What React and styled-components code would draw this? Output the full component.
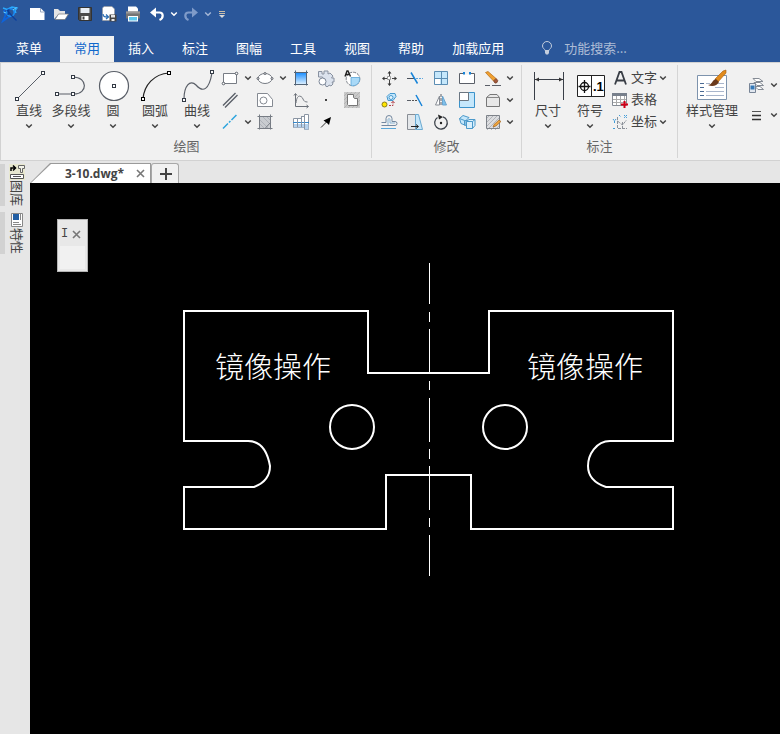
import React from "react";
import styled, { createGlobalStyle, css } from "styled-components";

const GlobalStyle = createGlobalStyle`
  *, *::before, *::after { box-sizing: border-box; }
  body {
    margin: 0;
    font-family: "Noto Sans CJK SC", sans-serif;
    font-size: 13px;
    color: #444;
    overflow: hidden;
  }
  button, input { font: inherit; color: inherit; }
`;

const Window = styled.div`
  display: flex;
  flex-direction: column;
  height: 100vh;
  background: #e6e6e6;
`;

const Header = styled.header`
  background: #2b579a;
  color: #fff;
`;

const PlainButton = styled.button`
  display: flex;
  align-items: center;
  justify-content: center;
  padding: 0;
  border: 0;
  background: transparent;
  cursor: default;
`;

const Svg = styled.svg`
  display: block;
  flex: none;
  overflow: visible;
`;

/* ---------- quick access bar ---------- */

const QuickBar = styled.div`
  display: flex;
  align-items: center;
  height: 28px;
`;

const LogoButton = styled(PlainButton)`
  width: 20px;
  height: 28px;
  margin-right: 5px;
`;

const QuickButton = styled(PlainButton)`
  width: ${(p) => (p.$narrow ? "18px" : "24px")};
  height: 28px;
`;

const QuickArrow = styled(PlainButton)`
  width: 10px;
  height: 28px;
`;

/* ---------- menu tabs ---------- */

const MenuBar = styled.nav`
  display: flex;
  align-items: flex-end;
  height: 34px;
  padding-left: 2px;
`;

const MenuTab = styled(PlainButton)`
  height: 26px;
  padding: 0 14px 4px;
  white-space: nowrap;
  ${(p) =>
    p.$active &&
    css`
      background: #f1f1f1;
      color: #1068cc;
    `}
  ${(p) => p.$first && css`margin-right: 4px;`}
`;

const SearchBox = styled.label`
  display: flex;
  align-items: center;
  gap: 8px;
  flex: 1;
  min-width: 0;
  height: 26px;
  padding: 0 0 4px 20px;
`;

const SearchInput = styled.input`
  flex: 1;
  min-width: 0;
  height: 20px;
  padding: 0;
  border: 0;
  outline: 0;
  background: transparent;
  &::placeholder { color: #adbcd6; opacity: 1; }
`;

/* ---------- ribbon ---------- */

const Ribbon = styled.section`
  display: flex;
  height: 99px;
  padding: 0;
  border: 1px solid #d2d2d2;
  border-right: 0;
  background: #f1f1f1;
  overflow: hidden;
`;

const Group = styled.div`
  display: flex;
  flex-direction: column;
  flex: none;
  margin: 2px 0;
  padding: ${(p) => p.$pad || "0 5px"};
  border-right: ${(p) => (p.$last ? "0" : "1px solid #d5d5d5")};
`;

const GroupBody = styled.div`
  display: flex;
  height: 72px;
`;

const GroupLabel = styled.div`
  line-height: 18px;
  text-align: center;
  color: #666;
`;

const BigButton = styled(PlainButton)`
  flex-direction: column;
  justify-content: flex-start;
  width: ${(p) => (p.$wide ? "60px" : "42px")};
  padding-top: 5px;
  white-space: nowrap;
`;

const BigLabel = styled.span`
  line-height: 16px;
  padding-bottom: 5px;
`;

const ToolGrid = styled.div`
  display: grid;
  grid-template-columns: ${(p) => p.$columns};
  grid-auto-rows: 22px;
  margin-top: 2px;
`;

const SmallButton = styled(PlainButton)`
  width: 100%;
  height: 22px;
  gap: 2px;
  grid-column: ${(p) => p.$col || "auto"};
  white-space: nowrap;
`;

const TextTool = styled(SmallButton)`
  justify-content: flex-start;
  line-height: 18px;
`;

const TextToolLabel = styled.span`
  padding-bottom: 2px;
`;

const StyleGrid = styled.div`
  display: grid;
  grid-template-columns: 26px 10px;
  grid-auto-rows: 30px;
  padding: 9px 0 0 1px;
`;

/* ---------- workspace ---------- */

const Workspace = styled.div`
  display: flex;
  flex: 1;
  min-height: 0;
`;

const SideBar = styled.aside`
  display: flex;
  flex-direction: column;
  gap: 6px;
  width: 30px;
  padding-top: 3px;
`;

const SideTab = styled(PlainButton)`
  flex-direction: column;
  justify-content: flex-start;
  align-items: center;
  width: 28px;
  height: 42px;
  padding-left: 1px;
  border-left: 5px solid #d2d2d2;
`;

const SideLabel = styled.span`
  writing-mode: vertical-rl;
  text-orientation: sideways;
  font-size: 13px;
  line-height: 16px;
`;

const Main = styled.main`
  display: flex;
  flex-direction: column;
  flex: 1;
  min-width: 0;
`;

const DocTabs = styled.div`
  display: flex;
  align-items: flex-end;
  height: 22px;
`;

const slant = "polygon(0 100%, 20px 0, 100% 0, 100% 100%)";

const DocTab = styled.div`
  position: relative;
  display: flex;
  align-items: center;
  gap: 12px;
  height: 20px;
  padding: 0 6px 0 35px;
  isolation: isolate;
  background: #9a9a9a;
  clip-path: ${slant};
  font-family: "Open Sans", "Noto Sans", sans-serif;
  font-size: 12px;
  font-weight: 700;
  &::before {
    content: "";
    position: absolute;
    z-index: -1;
    inset: 1px 1px 0 1px;
    background: #fff;
    clip-path: ${slant};
  }
`;

const NewTab = styled(PlainButton)`
  width: 28px;
  height: 20px;
  padding-left: 2px;
  border: 1px solid #a8a8a8;
  border-bottom: 0;
  border-radius: 3px 3px 0 0;
  background: #f1f1f1;
`;

const Canvas = styled.div`
  position: relative;
  flex: 1;
  min-height: 0;
  background: #000;
`;

const Drawing = styled.svg`
  display: block;
  width: 100%;
  height: 100%;
`;

const FloatPanel = styled.div`
  position: absolute;
  left: 27px;
  top: 36px;
  display: flex;
  flex-direction: column;
  width: 31px;
  height: 53px;
  padding: 2px;
  border: 1px solid #b4b4b4;
  background: #e8e8e8;
`;

const FloatHeader = styled.div`
  display: flex;
  align-items: center;
  gap: 4px;
  height: 24px;
  padding-left: 1px;
`;

const FloatTitle = styled.span`
  font-family: "Liberation Mono", monospace;
  font-size: 12px;
  line-height: 16px;
`;

const FloatBody = styled.div`
  flex: 1;
  background: #f1f1f1;
`;

/* ---------- icons ---------- */

function Icon({ size = 18, children }) {
  return (
    <Svg width={size} height={size} viewBox={`0 0 ${size} ${size}`} fill="none" stroke="#5a5f68" aria-hidden="true">
      {children}
    </Svg>
  );
}

function Chevron({ color = "#444" }) {
  return (
    <Svg width="8" height="6" viewBox="0 0 8 6" fill="none" stroke={color} strokeWidth="1.5" aria-hidden="true">
      <path d="M1.2 1.5 4 4.2 6.8 1.5" />
    </Svg>
  );
}

function Cross() {
  return (
    <Svg width="9" height="9" viewBox="0 0 9 9" stroke="#777" strokeWidth="1.6" aria-hidden="true">
      <path d="M1 1l7 7M8 1 1 8" />
    </Svg>
  );
}

const Node = ({ x, y, color = "#333a45" }) => (
  <rect x={x - 1.5} y={y - 1.5} width="3" height="3" fill="#fff" stroke={color} />
);

const quickIcons = {
  logo: (
    <Icon>
      <path d="M2 3 6 4.500 11 2 16 3 14 5.500 15 8" stroke="#2aa9ff" strokeWidth="1.400" />
      <path d="M3 5 4.500 10 2 16 7 12.500 10 11" stroke="#0d63dd" strokeWidth="1.800" />
      <circle cx="9.500" cy="7.500" r="3.800" stroke="#1b8ef5" strokeWidth="1.600" />
      <path d="M6 5 11 11 15.500 15.500M8 4 7 10" stroke="#0a3f9c" strokeWidth="1.300" />
      <path d="M2.500 7 5 8M12 5 15.500 2.500" stroke="#69d4ff" />
    </Icon>
  ),
  fresh: (
    <Icon>
      <path d="M2 3h10.500l4 4V15H2z" fill="#fff" stroke="none" />
      <path d="M12.500 3v4h4" stroke="#9aa8c0" />
    </Icon>
  ),
  open: (
    <Icon>
      <path d="M2 14V4h4l2 2h5v3H7z" fill="#e4e4e4" stroke="none" />
      <path d="M3 14.500 6.500 9H16.500l-3.500 5.500z" fill="#fff" stroke="#777" strokeWidth=".7" />
    </Icon>
  ),
  save: (
    <Icon>
      <path d="M2.500 2.500h13v13h-12l-1-1z" fill="#4b4b4b" stroke="#333" />
      <path d="M4.500 3h9v5h-9z" fill="#e9eef5" stroke="none" />
      <path d="M5.500 11h7v4h-7z" fill="#fff" stroke="none" />
      <path d="M6.500 11.500h2v3h-2z" fill="#444" stroke="none" />
    </Icon>
  ),
  exportDwg: (
    <Icon>
      <path d="M4 1.500h8l2.500 2.500V15.500H2.500V3z" fill="#fff" stroke="#999" strokeWidth=".6" />
      <path d="M3 9c0 3 2 3 5 3M6 9.500 8.500 12 6 14" stroke="#2d6fb4" strokeWidth="1.300" />
      <path d="M9.500 9.500h7v7h-7z" fill="#444" stroke="none" />
      <path d="M11 10h4v2.500h-4zM11.500 14h3v2h-3z" fill="#e6e6e6" stroke="none" />
    </Icon>
  ),
  print: (
    <Icon>
      <path d="M4 1.500h8l2 2V7H4z" fill="#fff" stroke="none" />
      <path d="M2 6.500h14v7H2z" fill="#757575" stroke="none" />
      <path d="M2 6.500h14v2H2z" fill="#9a9a9a" stroke="none" />
      <path d="M4 11h10v5.500H4z" fill="#fff" stroke="none" />
      <path d="M5 12h8v3.500H5z" fill="#5cc9ef" stroke="none" />
    </Icon>
  ),
  undo: (
    <Icon>
      <path d="M8 2.500 2 7.500 8 12.500" fill="#fff" stroke="none" />
      <path d="M7 7.500h4.500c4 0 4.500 5.500 0 7.500" stroke="#fff" strokeWidth="2.200" />
    </Icon>
  ),
  redo: (
    <Icon>
      <path d="M10 2.500 16 7.500 10 12.500" fill="#7f9bc9" stroke="none" />
      <path d="M11 7.500H6.500c-4 0-4.500 5.500 0 7.500" stroke="#7f9bc9" strokeWidth="2.200" />
    </Icon>
  ),
};

const bigIcons = {
  line: (
    <Icon size={32}>
      <path d="M4 29 30 3" />
      <Node x={4} y={29} /><Node x={30} y={3} />
    </Icon>
  ),
  polyline: (
    <Icon size={32}>
      <path d="M2 24H19C33 24 33 7 18 7" strokeWidth="1.200" />
      <Node x={2} y={24} /><Node x={18} y={24} /><Node x={18} y={7} />
    </Icon>
  ),
  circle: (
    <Icon size={32}>
      <circle cx="17" cy="16" r="14.500" fill="#fff" strokeWidth="1.200" />
      <Node x={17} y={16} />
    </Icon>
  ),
  arc: (
    <Icon size={32}>
      <path d="M4 29C5 15 15 4 30 3" stroke="#222" strokeWidth="1.200" />
      <Node x={4} y={29} color="#000" /><Node x={30} y={3} color="#000" />
    </Icon>
  ),
  spline: (
    <Icon size={32}>
      <path d="M3 29C3 16 9 9 15 15c7 8 13 5 16-12" strokeWidth="1.200" />
      <Node x={3} y={30} /><Node x={31} y={2} />
    </Icon>
  ),
  dimension: (
    <Icon size={32}>
      <path d="M2.500 2v28M31.500 2v28M3 9.500h28" stroke="#3a3f48" />
      <path d="M3 9.500 7 7.500v4zM31 9.500 27 7.500v4z" fill="#333" stroke="none" />
    </Icon>
  ),
  symbol: (
    <Icon size={32}>
      <path d="M3.500 5.500h27v21h-27zM17.500 5.500v21" fill="#fff" stroke="#222" />
      <circle cx="10.500" cy="16.500" r="4" stroke="#111" strokeWidth="1.300" />
      <path d="M4.500 16.500h12M10.500 10v13" stroke="#111" strokeWidth="1.300" />
      <text x="19" y="21" fill="#000" stroke="none" fontFamily="Liberation Sans, sans-serif" fontSize="13" fontWeight="700">.1</text>
    </Icon>
  ),
  styles: (
    <Icon size={32}>
      <path d="M1.500 5.500h29v24h-29z" fill="#fff" stroke="#7d93ad" />
      <path d="M4 13.500h4M4 17.500h4M4 21.500h4M4 25.500h4" stroke="#4a6a93" />
      <path d="M10 13.500h4M19 17.500h9M10 21.500h18M10 25.500h18M22 13.500h6" stroke="#a9b6cc" />
      <path d="M19 9 27 1l3-1v3l-8 9z" fill="#e08a1c" stroke="#a85c0c" strokeWidth=".6" />
      <path d="M12 15c4 0 4-5 8-6l3 3c-2 4-7 5-11 3z" fill="#6b3a1d" stroke="none" />
    </Icon>
  ),
};

const HatchLines = () => (
  <path d="M2 6 6 2M2 10l8-8M2 14 14 2M3 17 16 4M7 17l9-9M11 17l5-5" stroke="#a6a9ad" strokeWidth=".8" />
);

const small = {
  rect: (
    <Icon>
      <path d="M2.500 4.500h13v10h-13z" fill="#fff" stroke="#777c84" />
      <circle cx="15.500" cy="4.500" r="1.300" fill="#fff" /><circle cx="2.500" cy="14.500" r="1.300" fill="#fff" />
    </Icon>
  ),
  ellipse: (
    <Icon>
      <ellipse cx="9" cy="9.500" rx="7" ry="5" fill="#fff" stroke="#777c84" />
      <circle cx="9" cy="4.500" r="1" fill="#fff" /><circle cx="2" cy="9.500" r="1" fill="#fff" /><circle cx="16" cy="9.500" r="1" fill="#fff" />
    </Icon>
  ),
  gradient: (
    <Icon>
      <defs>
        <linearGradient id="blueFill" x1="0" y1="0" x2="0" y2="1">
          <stop offset="0" stopColor="#178cff" /><stop offset="1" stopColor="#e2f3ff" />
        </linearGradient>
      </defs>
      <path d="M3.500 3.500h11v12h-11z" fill="url(#blueFill)" stroke="none" />
      <path d="M3.500 1.500v15M14.500 1.500v15M2 3.500h14M2 15.500h14" stroke="#536477" />
    </Icon>
  ),
  gear: (
    <Icon>
      <path d="M1.500 2.500H5V5h2V2h4v3l2-1 3 3-1.500 2H17v4h-2l1 2-2 2-2-1-1 1.500H9L5.500 8h-4z" fill="#dbe2ed" stroke="#8891a0" />
      <circle cx="5.500" cy="12.500" r="3.500" fill="#fff" stroke="#7c8798" />
    </Icon>
  ),
  textArc: (
    <Icon>
      <circle cx="10" cy="10" r="6.800" fill="#fff" stroke="#777c84" strokeDasharray="3 1" />
      <path d="M8 8.500h8.500a6.800 6.800 0 0 1-8.500 8z" fill="#a9d9f7" stroke="#5aa6d8" strokeWidth=".8" />
      <path d="M2 7.500 4 2h1L7.500 7.500M3 5.500h3.500" stroke="#222" strokeWidth="1.400" />
    </Icon>
  ),
  parallel: (
    <Icon><path d="M2 14.500 14.500 2M4 16.500 16.500 4" strokeWidth="1.400" /></Icon>
  ),
  hole: (
    <Icon>
      <path d="M1.500 2.500h10l5 6v7h-15z" fill="#fff" stroke="#858a92" /><circle cx="7.500" cy="9.500" r="3.500" stroke="#858a92" />
    </Icon>
  ),
  graph: (
    <Icon>
      <path d="M3.500 3v12.500H16M2 4.500 3.500 2.500 5 4.500M14.500 14l2 1.500-2 1.500" stroke="#6b7078" />
      <path d="M4 12C5 2 10 5 11 8c.7 2 2 3 4.500 3" stroke="#777c84" />
    </Icon>
  ),
  point: (
    <Icon><path d="M8 8h2v2H8z" fill="#444" stroke="none" /></Icon>
  ),
  region: (
    <Icon>
      <path d="M1 1h16v16H1z" fill="#c9c9c9" stroke="none" />
      <path d="M1 5l4-4M1 9l8-8M1 13 13 1M1 17 17 1M5 17 17 5M9 17l8-8M13 17l4-4" stroke="#b0b0b0" strokeWidth=".8" />
      <path d="M4.500 3.500h6v3l1 1h3v7h-9l-1-1z" fill="#fff" stroke="#777" />
    </Icon>
  ),
  centerline: (
    <Icon><path d="M2 15.500 15.500 2" stroke="#2da5de" strokeWidth="1.500" strokeDasharray="7 1.500 2 1.500" /></Icon>
  ),
  hatch: (
    <Icon>
      <path d="M3 3h12v12H3z" fill="#c9ccd0" stroke="none" />
      <path d="M3 6l9 9M3 10l5 5M6 3l9 9M10 3l5 5" stroke="#a7abb2" strokeWidth=".8" />
      <path d="M3.500 1.500v15M14.500 1.500v15M1.500 3.500h15M1.500 15.500h15M9 15.500 15 9" stroke="#777c84" />
    </Icon>
  ),
  shaft: (
    <Icon>
      <path d="M1.500 5.500h8v-2h3v-2h4v15h-4v-2h-11z" fill="#fff" stroke="#8a95a3" />
      <path d="M2 11h14.500v5.500h-4v-2H2z" fill="#b5d2ee" stroke="none" />
      <path d="M1 9.500h16" stroke="#3388cc" /><path d="M5.500 5v9M9.500 3v11M12.500 3v13" stroke="#8a95a3" />
    </Icon>
  ),
  arrow: (
    <Icon><path d="M4 14.500 10 8.500" stroke="#333" /><path d="M14 4 12 12 10 10 6.500 7.500z" fill="#000" stroke="none" /></Icon>
  ),
  move: (
    <Icon>
      <path d="M9.500 4v3M9.500 11v4M4 9.500h3M12 9.500h3" stroke="#444" />
      <path d="M7.500 7.500h3v3h-3z" fill="#fff" stroke="#999" />
      <path d="M9.500 2l2 2.500h-4zM9.500 17l2-2.500h-4zM2 9.500l2.500-2v4zM17 9.500l-2.500-2v4z" fill="#333" stroke="none" />
    </Icon>
  ),
  trim: (
    <Icon>
      <path d="M1 9.500h8" stroke="#4a515c" /><path d="M10 9.500h7" stroke="#5da7df" strokeDasharray="2 1" /><path d="M5 3.500 11.500 14.500" stroke="#1683d8" strokeWidth="1.500" />
    </Icon>
  ),
  array: (
    <Icon>
      <path d="M2.500 2.500h13v13h-13z" fill="#c5e7fb" stroke="#5b8db3" /><path d="M3 10h5v5H3z" fill="#fff" stroke="none" /><path d="M9.500 2.500v13M2.500 9.500h13" stroke="#5b8db3" />
    </Icon>
  ),
  breakAt: (
    <Icon>
      <path d="M6 4.500H1.500v10h15v-10H12" fill="#fff" /><path d="M6 4.500h6" stroke="#f1f1f1" strokeWidth="2" /><path d="M5 3h2v2.500H5zM11 3h2v2.500h-2z" fill="#1683d8" stroke="none" />
    </Icon>
  ),
  erase: (
    <Icon>
      <path d="M1.500 3.500 4 2.500 12 9.500 9.500 12z" fill="#f0a030" stroke="#b56a13" strokeWidth=".7" />
      <path d="M9.500 12 12 9.500q3 2 1 4-2 2-3.500-1.500z" fill="#a55a3c" stroke="#734026" strokeWidth=".7" />
      <path d="M1 16.500h5M8 16.500h9" />
    </Icon>
  ),
  copy: (
    <Icon>
      <path d="M7 5.500 10 2.500h5l1 3-3 4H8z" fill="#c5e7fb" stroke="#4599cf" /><circle cx="11" cy="6.500" r="2" fill="#e6f5fd" stroke="#4599cf" />
      <circle cx="4.500" cy="13.500" r="2.500" fill="#ffe600" stroke="#8b7f1a" /><path d="M9 14.500h4v-4M11.500 12 13 10l1.500 2" stroke="#b2434d" strokeDasharray="2 1" />
    </Icon>
  ),
  extend: (
    <Icon>
      <path d="M1 9.500h4" /><path d="M6 9.500h6" stroke="#555" strokeDasharray="2 1" /><path d="M10 4 16 15" stroke="#1683d8" strokeWidth="1.500" />
    </Icon>
  ),
  mirror: (
    <Icon><path d="M7.500 5v9H3.500z" fill="#fff" stroke="#888d95" /><path d="M10.500 5v9H14.500z" fill="#7fc0ec" stroke="#6aa5cf" /><path d="M9 3v12" strokeDasharray="3 1" /></Icon>
  ),
  scale: (
    <Icon><path d="M1.500 1.500h15v15h-15z" fill="#c5e7fb" stroke="#3b92ca" /><path d="M1.500 1.500h9v8h-9z" fill="#fff" stroke="#6b7580" /></Icon>
  ),
  chamfer: (
    <Icon><path d="M2.500 6.500 6 3.500h7l2.500 3v9h-13z" fill="#e8e8e8" stroke="#777" /><path d="M2.500 6.500h13" stroke="#888" /></Icon>
  ),
  offset: (
    <Icon>
      <path d="M1.500 9.500H6v-4a3 3 0 0 1 6 0v3h3a2 2 0 0 1 0 4H1.500" stroke="#7388a0" />
      <path d="M1 15.500h15" stroke="#5aa6d8" /><path d="M8 12V7c0-2 2-2 2 0v3h5" stroke="#8ab5d5" />
    </Icon>
  ),
  stretch: (
    <Icon>
      <path d="M1.500 1.500h8v15h-8z" fill="#e4e7ea" stroke="#888d95" /><path d="M9.500 1.500h3l4 15h-7z" fill="#c5e7fb" stroke="#6ba9d0" /><path d="M5 13.500h7M10 11.500l2.500 2-2.500 2" stroke="#222" />
    </Icon>
  ),
  rotate: (
    <Icon>
      <path d="M5.500 4.500A6.300 6.300 0 1 0 11 3.800" stroke="#3d434b" strokeWidth="1.300" /><path d="M6 1.500 11 4 7 6.500z" fill="#222" stroke="none" /><circle cx="9" cy="10" r="1.200" fill="#222" stroke="none" />
    </Icon>
  ),
  explode: (
    <Icon>
      <path d="M1.500 5.500 5 2.500l6 2-3 3v5l-5 -2z" fill="#c5e7fb" stroke="#4b99ca" /><path d="M1.500 5.500l5 2v5M6.500 7.500h4" stroke="#4b99ca" />
      <path d="M8.500 8.500 11 6.500h6v6l-2.500 3h-6z" fill="#d9effc" stroke="#4b99ca" /><path d="M8.500 8.500h6v7M14.500 8.500l2.500-2" stroke="#4b99ca" />
    </Icon>
  ),
  hatchEdit: (
    <Icon>
      <path d="M2.500 2.500h13v13h-13z" fill="#dcdde0" stroke="none" /><HatchLines />
      <path d="M2.500 2.500h13v13h-13z" stroke="#7d8289" /><path d="M10 11.500 15 7l2 1.500-5 4.500-3 1z" fill="#eda23a" stroke="#985d18" strokeWidth=".6" />
    </Icon>
  ),
  letter: (
    <Icon>
      <path d="M4 15.500 8.500 3h2L15 15.500M5.500 11.500h8" stroke="#383d45" strokeWidth="1.800" />
    </Icon>
  ),
  table: (
    <Icon>
      <path d="M1.500 2.500h14v12h-14z" fill="#fff" stroke="#858b94" /><path d="M1 2h15v3H1z" fill="#777f8b" stroke="none" />
      <path d="M5.500 5v9M9.500 5v9M13.500 5v9M2 8.500h13M2 11.500h13" stroke="#aaa" /><path d="M10 13.500h7M13.500 10v7" stroke="#d00018" strokeWidth="2" />
    </Icon>
  ),
  coordinate: (
    <Icon>
      <path d="M6.500 4v11.500H16M6.500 8l5 4 4-5M11.500 9v7" stroke="#8b9199" strokeDasharray="3 1" />
      <path d="M2 6l1.500 2L5 6M3.500 8v3M8 2l2 2M13 2l3 3M16 2l-3 3M2 15.500h3" stroke="#409bd8" strokeDasharray="2 1" />
    </Icon>
  ),
  layers: (
    <Icon>
      <path d="M6 2.500h6l4 3H9zM7 6.500h6l3.500 3H10zM8 10.500h5l3.500 3H11z" fill="#fff" stroke="#858b94" />
      <path d="M2.500 7.500h6v9h-6z" fill="#e1e7ef" stroke="#778496" /><path d="M3.500 9.500h4v4h-4z" fill="#3479b8" stroke="none" />
    </Icon>
  ),
  lineWeight: (
    <Icon><path d="M5 5.500h9" stroke="#555" /><path d="M5 9.500h9M5 13.500h9" stroke="#333" strokeWidth="1.500" /></Icon>
  ),
};

const LibraryIcon = () => (
  <Icon size={16}>
    <path d="M0 0h16v16H0z" fill="#e8e8cf" stroke="none" />
    <path d="M2 7V4h4M4 1.500 6.500 4 4 6.500" stroke="#000" strokeWidth="1.500" />
    <path d="M9.500 1.500h6v3h-2v4h-2v-4h-2z" fill="#f4f4ea" stroke="#666" />
    <path d="M1.500 10.500h13v4h-13z" fill="#fff" stroke="#555" /><path d="M4 12.500h8" stroke="#555" />
  </Icon>
);

const PropertiesIcon = () => (
  <Icon size={16}>
    <path d="M2.500 1.500h11v13h-11z" fill="#fff" stroke="#888" /><path d="M4 2h6v6H4z" fill="#225fa4" stroke="none" />
    <path d="M11.500 2v6M4 10.500h6M4 12.500h8" stroke="#888" />
  </Icon>
);

/* ---------- data ---------- */

const menuTabs = ["菜单", "常用", "插入", "标注", "图幅", "工具", "视图", "帮助", "加载应用"];

const drawTools = [
  ["直线", "line"], ["多段线", "polyline"], ["圆", "circle"], ["圆弧", "arc"], ["曲线", "spline"],
];

const drawGrid = [
  ["矩形", "rect", 1], ["矩形选项", null, 2], ["椭圆", "ellipse", 3], ["椭圆选项", null, 4],
  ["渐变填充", "gradient", 5], ["齿轮", "gear", 6], ["弧形文字", "textArc", 7],
  ["平行线", "parallel", 1], ["孔", "hole", 3], ["公式曲线", "graph", 5], ["点", "point", 6], ["面域", "region", 7],
  ["中心线", "centerline", 1], ["中心线选项", null, 2], ["剖面线", "hatch", 3], ["轴", "shaft", 5], ["箭头", "arrow", 6],
];

const modifyGrid = [
  ["移动", "move", 1], ["裁剪", "trim", 2], ["阵列", "array", 3], ["打断", "breakAt", 4], ["删除", "erase", 5], ["删除选项", null, 6],
  ["复制", "copy", 1], ["延伸", "extend", 2], ["镜像", "mirror", 3], ["缩放", "scale", 4], ["倒角", "chamfer", 5], ["倒角选项", null, 6],
  ["等距", "offset", 1], ["拉伸", "stretch", 2], ["旋转", "rotate", 3], ["分解", "explode", 4], ["编辑剖面线", "hatchEdit", 5], ["编辑选项", null, 6],
];

const textTools = [["文字", "letter", true], ["表格", "table", false], ["坐标", "coordinate", true]];

function BigTool({ label, icon, wide }) {
  return (
    <BigButton type="button" $wide={wide}>
      {bigIcons[icon]}
      <BigLabel>{label}</BigLabel>
      <Chevron />
    </BigButton>
  );
}

function IconTools({ tools, columns }) {
  return (
    <ToolGrid $columns={columns}>
      {tools.map(([name, icon, col]) => (
        <SmallButton key={name} type="button" aria-label={name} $col={col}>
          {icon ? small[icon] : <Chevron />}
        </SmallButton>
      ))}
    </ToolGrid>
  );
}

export default function App() {
  return (
    <Window>
      <GlobalStyle />
      <Header>
        <QuickBar>
          <LogoButton type="button" aria-label="应用菜单">{quickIcons.logo}</LogoButton>
          <QuickButton type="button" aria-label="新建">{quickIcons.fresh}</QuickButton>
          <QuickButton type="button" aria-label="打开">{quickIcons.open}</QuickButton>
          <QuickButton type="button" aria-label="保存">{quickIcons.save}</QuickButton>
          <QuickButton type="button" aria-label="另存为">{quickIcons.exportDwg}</QuickButton>
          <QuickButton type="button" aria-label="打印">{quickIcons.print}</QuickButton>
          <QuickButton type="button" aria-label="撤销">{quickIcons.undo}</QuickButton>
          <QuickArrow type="button" aria-label="撤销列表"><Chevron color="#fff" /></QuickArrow>
          <QuickButton type="button" aria-label="恢复">{quickIcons.redo}</QuickButton>
          <QuickArrow type="button" aria-label="恢复列表"><Chevron color="#a5b7d6" /></QuickArrow>
          <QuickButton type="button" aria-label="自定义" $narrow>
            <Svg width="6" height="7" viewBox="0 0 6 7" aria-hidden="true">
              <path d="M0 .5h6M0 2.500h6" stroke="#c9bda9" /><path d="M0 4h6L3 7z" fill="#d8d8d8" />
            </Svg>
          </QuickButton>
        </QuickBar>
        <MenuBar>
          {menuTabs.map((tab, i) => (
            <MenuTab key={tab} type="button" $first={i === 0} $active={i === 1}>{tab}</MenuTab>
          ))}
          <SearchBox>
            <Svg width="18" height="16" viewBox="0 0 18 16" fill="none" stroke="#c4cede" aria-hidden="true">
              <path d="M7 11.500C7 10 4.500 9.500 4.500 7a4.500 4.500 0 0 1 9 0c0 2.500-2.500 3-2.500 4.500z" />
              <path d="M7 12h4v2L10 15.500H8L7 14z" fill="#c4cede" stroke="none" />
            </Svg>
            <SearchInput type="text" placeholder="功能搜索..." aria-label="功能搜索" />
          </SearchBox>
        </MenuBar>
      </Header>

      <Ribbon>
        <Group $pad="0 6px 0 7px">
          <GroupBody>
            {drawTools.map(([label, icon]) => <BigTool key={icon} label={label} icon={icon} />)}
            <IconTools tools={drawGrid} columns="24px 11px 24px 11px 25px 26px 26px" />
          </GroupBody>
          <GroupLabel>绘图</GroupLabel>
        </Group>
        <Group $pad="0 4px">
          <GroupBody>
            <IconTools tools={modifyGrid} columns="repeat(5, 26px) 8px 3px" />
          </GroupBody>
          <GroupLabel>修改</GroupLabel>
        </Group>
        <Group $pad="0 5px">
          <GroupBody>
            <BigTool label="尺寸" icon="dimension" />
            <BigTool label="符号" icon="symbol" />
            <ToolGrid $columns="61px">
              {textTools.map(([label, icon, more]) => (
                <TextTool key={label} type="button">
                  {small[icon]}
                  <TextToolLabel>{label}</TextToolLabel>
                  {more && <Chevron />}
                </TextTool>
              ))}
            </ToolGrid>
          </GroupBody>
          <GroupLabel>标注</GroupLabel>
        </Group>
        <Group $pad="0 0 0 4px" $last>
          <GroupBody>
            <BigTool label="样式管理" icon="styles" wide />
            <StyleGrid>
              <SmallButton type="button" aria-label="图层">{small.layers}</SmallButton>
              <SmallButton type="button" aria-label="图层选项"><Chevron /></SmallButton>
              <SmallButton type="button" aria-label="线宽">{small.lineWeight}</SmallButton>
              <SmallButton type="button" aria-label="线宽选项"><Chevron /></SmallButton>
            </StyleGrid>
          </GroupBody>
        </Group>
      </Ribbon>

      <Workspace>
        <SideBar>
          <SideTab type="button"><LibraryIcon /><SideLabel>图库</SideLabel></SideTab>
          <SideTab type="button"><PropertiesIcon /><SideLabel>特性</SideLabel></SideTab>
        </SideBar>
        <Main>
          <DocTabs>
            <DocTab>
              <span>3-10.dwg*</span>
              <PlainButton type="button" aria-label="关闭文档"><Cross /></PlainButton>
            </DocTab>
            <NewTab type="button" aria-label="新建文档">
              <Svg width="12" height="12" viewBox="0 0 12 12" stroke="#444" strokeWidth="2" aria-hidden="true">
                <path d="M6 0v12M0 6h12" />
              </Svg>
            </NewTab>
          </DocTabs>
          <Canvas>
            <Drawing viewBox="30 183 750 551" fill="none" stroke="#fff" strokeWidth="2" role="img" aria-label="镜像操作图形">
              <path d="M184 441V311H368V373H489V311H673V441H610C596 441 588 455 588 466C588 478 597 484 606 487H673V529H471V475H386V529H184V487H254C262 484 270 478 270 466C267 449 259 441 248 441H183" />
              <circle cx="352" cy="427" r="22" />
              <circle cx="505" cy="427" r="22" />
              <path d="M429.500 263V576" strokeWidth="1" strokeDasharray="41 8 10 7 44 8 9 8 44 7 10 7 44 8 9 8 41 9" />
              <g fill="#fff" stroke="none" fontSize="29" fontWeight="300" fontFamily="'Noto Sans CJK SC', sans-serif">
                <text x="215" y="378">镜像操作</text>
                <text x="527" y="378">镜像操作</text>
              </g>
            </Drawing>
            <FloatPanel>
              <FloatHeader>
                <FloatTitle>I</FloatTitle>
                <PlainButton type="button" aria-label="关闭面板"><Cross /></PlainButton>
              </FloatHeader>
              <FloatBody />
            </FloatPanel>
          </Canvas>
        </Main>
      </Workspace>
    </Window>
  );
}
